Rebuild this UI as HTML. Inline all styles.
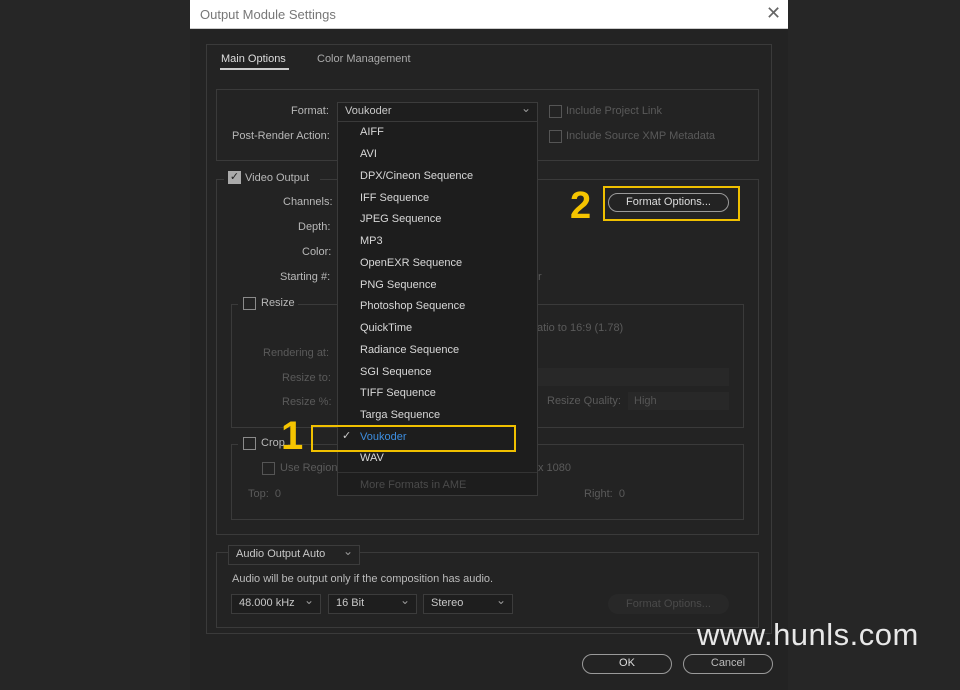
<!DOCTYPE html>
<html><head><meta charset="utf-8"><style>
*{margin:0;padding:0;box-sizing:border-box}
body{width:960px;height:690px;background:#262626;font-family:"Liberation Sans",sans-serif;font-size:11px;color:#b8b8b8;position:relative;overflow:hidden}
.a{position:absolute;white-space:nowrap}
.box{position:absolute;border:1px solid #3a3a3a}
.cb{position:absolute;width:13px;height:13px;border:1px solid #8a8a8a}
.dim{color:#5a5a5a}
.dd{position:absolute;background:#1e1e1e;border:1px solid #3c3c3c;color:#c8c8c8;padding:2px 7px;height:20px}
.dd:after{content:"⌄";position:absolute;right:6px;top:-2px;font-size:12px;color:#999}
.btn{position:absolute;border:1.5px solid #9a9a9a;border-radius:10px;text-align:center;color:#ddd;height:20px;line-height:17px}
.item{position:absolute;left:360px;color:#d8d8d8}
</style></head><body>
<div class="a" style="left:190px;top:0;width:598px;height:690px;background:#232323"></div>
<div class="a" style="left:190px;top:0;width:598px;height:29px;background:#fff;border-bottom:1px solid #ccc"></div>
<div class="a" style="left:200px;top:7px;font-size:13px;color:#777">Output Module Settings</div>
<div class="a" style="left:766px;top:3px;font-size:18px;color:#666">✕</div>
<div class="box" style="left:206px;top:44px;width:566px;height:590px"></div>
<div class="a" style="left:221px;top:53px;color:#ddd">Main Options</div>
<div class="a" style="left:220px;top:68px;width:69px;height:2px;background:#ccc"></div>
<div class="a" style="left:317px;top:53px;color:#aaa">Color Management</div>

<div class="box" style="left:216px;top:89px;width:543px;height:72px"></div>
<div class="a" style="left:291px;top:105px">Format:</div>
<div class="a" style="left:232px;top:130px">Post-Render Action:</div>
<div class="dd" style="left:337px;top:102px;width:201px">Voukoder</div>
<div class="cb" style="left:549px;top:105px;border-color:#555"></div><div class="a dim" style="left:566px;top:105px">Include Project Link</div>
<div class="cb" style="left:549px;top:130px;border-color:#555"></div><div class="a dim" style="left:566px;top:130px">Include Source XMP Metadata</div>

<div class="box" style="left:216px;top:179px;width:543px;height:356px"></div>
<div class="a" style="left:224px;top:170px;width:96px;height:16px;background:#232323"></div>
<div class="cb" style="left:228px;top:171px;background:#aaa;border-color:#aaa;color:#222;font-size:11px;line-height:11px;text-align:center">✓</div>
<div class="a" style="left:245px;top:172px">Video Output</div>
<div class="a" style="left:283px;top:196px">Channels:</div>
<div class="a" style="left:298px;top:221px">Depth:</div>
<div class="a" style="left:302px;top:246px">Color:</div>
<div class="a" style="left:280px;top:271px">Starting #:</div>
<div class="a dim" style="left:538px;top:271px">r</div>
<div class="a" style="left:570px;top:186px;font-size:38px;font-weight:bold;color:#f5c400;line-height:40px">2</div>
<div class="a" style="left:603px;top:186px;width:137px;height:35px;border:2px solid #f0c000"></div>
<div class="btn" style="left:608px;top:193px;width:121px;height:19px;font-size:11px">Format Options...</div>

<div class="box" style="left:231px;top:304px;width:513px;height:124px"></div>
<div class="a" style="left:238px;top:296px;width:60px;height:16px;background:#232323"></div>
<div class="cb" style="left:243px;top:297px"></div><div class="a" style="left:261px;top:297px">Resize</div>
<div class="a dim" style="left:263px;top:347px">Rendering at:</div>
<div class="a dim" style="left:282px;top:372px">Resize to:</div>
<div class="a dim" style="left:282px;top:396px">Resize %:</div>
<div class="a dim" style="left:537px;top:322px">atio to 16:9 (1.78)</div>
<div class="a" style="left:520px;top:368px;width:209px;height:18px;background:#282828"></div>
<div class="a dim" style="left:547px;top:395px">Resize Quality:</div>
<div class="a" style="left:628px;top:392px;width:101px;height:18px;background:#282828;color:#555;padding:3px 6px">High</div>

<div class="box" style="left:231px;top:444px;width:513px;height:76px"></div>
<div class="a" style="left:238px;top:436px;width:50px;height:16px;background:#232323"></div>
<div class="cb" style="left:243px;top:437px"></div><div class="a" style="left:261px;top:437px">Crop</div>
<div class="cb" style="left:262px;top:462px;border-color:#555"></div><div class="a dim" style="left:280px;top:462px">Use Region</div>
<div class="a dim" style="left:538px;top:462px">x 1080</div>
<div class="a dim" style="left:248px;top:488px">Top: &nbsp;0</div>
<div class="a dim" style="left:584px;top:488px">Right: &nbsp;0</div>

<div class="box" style="left:216px;top:552px;width:543px;height:76px"></div>
<div class="dd" style="left:228px;top:545px;width:132px;background:#232323">Audio Output Auto</div>
<div class="a" style="left:232px;top:573px;color:#bbb">Audio will be output only if the composition has audio.</div>
<div class="dd" style="left:231px;top:594px;width:90px">48.000 kHz</div>
<div class="dd" style="left:328px;top:594px;width:89px">16 Bit</div>
<div class="dd" style="left:423px;top:594px;width:90px">Stereo</div>
<div class="a" style="left:608px;top:594px;width:121px;height:20px;border-radius:10px;background:#282828;color:#4a4a4a;text-align:center;line-height:20px">Format Options...</div>

<div class="btn" style="left:582px;top:654px;width:90px">OK</div>
<div class="btn" style="left:683px;top:654px;width:90px;color:#bbb">Cancel</div>

<div class="a" style="left:337px;top:121px;width:201px;height:375px;background:#1d1d1d;border:1px solid #3a3a3a"></div>
<div class="item" style="top:126px">AIFF</div>
<div class="item" style="top:148px">AVI</div>
<div class="item" style="top:170px">DPX/Cineon Sequence</div>
<div class="item" style="top:192px">IFF Sequence</div>
<div class="item" style="top:213px">JPEG Sequence</div>
<div class="item" style="top:235px">MP3</div>
<div class="item" style="top:257px">OpenEXR Sequence</div>
<div class="item" style="top:279px">PNG Sequence</div>
<div class="item" style="top:300px">Photoshop Sequence</div>
<div class="item" style="top:322px">QuickTime</div>
<div class="item" style="top:344px">Radiance Sequence</div>
<div class="item" style="top:366px">SGI Sequence</div>
<div class="item" style="top:387px">TIFF Sequence</div>
<div class="item" style="top:409px">Targa Sequence</div>
<div class="a" style="left:342px;top:429px;color:#ccc">✓</div>
<div class="item" style="top:431px;color:#3d8ee0">Voukoder</div>
<div class="item" style="top:452px">WAV</div>
<div class="a" style="left:338px;top:472px;width:199px;height:1px;background:#333"></div>
<div class="item" style="top:479px;color:#4a4a4a">More Formats in AME</div>
<div class="a" style="left:311px;top:425px;width:205px;height:27px;border:2px solid #f0c000"></div>
<div class="a" style="left:281px;top:414px;font-size:40px;font-weight:bold;color:#f5c400;line-height:44px">1</div>

<div class="a" style="left:697px;top:617px;font-size:31px;color:#e8e8e8;letter-spacing:0.5px">www.hunls.com</div>
</body></html>
